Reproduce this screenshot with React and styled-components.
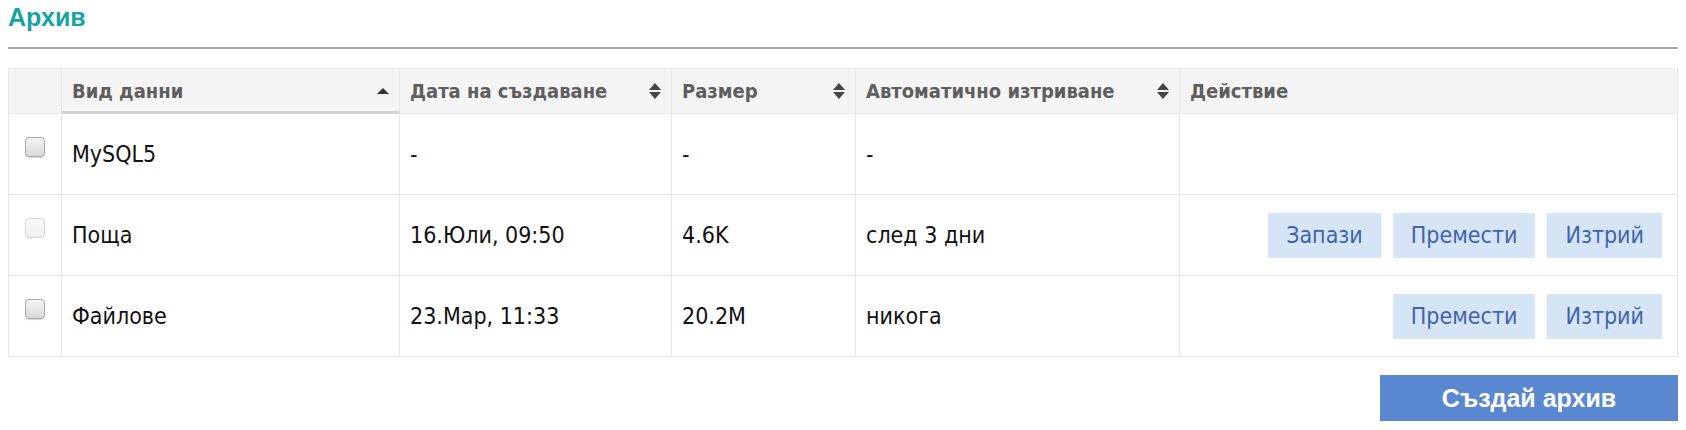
import React from "react"
import styled, { createGlobalStyle, css } from "styled-components"

const GlobalStyle = createGlobalStyle`
  html, body {
    margin: 0;
    padding: 0;
    background: #fff;
  }
  body {
    font-family: "DejaVu Sans Condensed", "DejaVu Sans", Tahoma, sans-serif;
  }
`

const Page = styled.div`
  padding: 3px 8px 0;
  box-sizing: border-box;
  width: 1686px;
`

const Title = styled.h2`
  margin: 0;
  font-family: "Liberation Sans", Arial, sans-serif;
  font-size: 25px;
  line-height: 28px;
  font-weight: bold;
  color: #17a3a6;
`

const Rule = styled.div`
  height: 2px;
  margin-top: 16px;
  background: #aaaaaa;
`

const Table = styled.table`
  width: 100%;
  margin-top: 19px;
  border-collapse: collapse;
  table-layout: fixed;
  border: 1px solid #e6e6e6;
`

const Th = styled.th`
  height: 44px;
  padding: 0 10px;
  background: #f5f5f5;
  border: 1px solid #e6e6e6;
  text-align: left;
  font-size: 20px;
  font-weight: bold;
  color: #5e5e5e;
  white-space: nowrap;

  ${(p) =>
    p.$active &&
    css`
      border-bottom-color: #d4d4d4;
      box-shadow: inset 0 -2px 0 #d4d4d4;
    `}
`

const HeadInner = styled.div`
  display: flex;
  align-items: center;
  justify-content: space-between;
`

const Td = styled.td`
  height: 81px;
  padding: 0 10px;
  box-sizing: border-box;
  border: 1px solid #e6e6e6;
  font-size: 23px;
  color: #111;
  vertical-align: middle;
  white-space: nowrap;
`

const CheckCell = styled(Td)`
  padding: 0;
`

const Check = styled.input.attrs({ type: "checkbox" })`
  appearance: none;
  display: block;
  margin: 0 auto 14px;
  width: 20px;
  height: 20px;
  box-sizing: border-box;
  border-radius: 4px;
  border: 1px solid ${(p) => (p.disabled ? "#d6d6d6" : "#a9a9a9")};
  background: ${(p) =>
    p.disabled
      ? "linear-gradient(#fafafa, #efefef)"
      : "linear-gradient(#f5f5f5, #d9d9d9)"};
  box-shadow: ${(p) => (p.disabled ? "none" : "0 1px 1px rgba(0,0,0,0.15)")};
`

const Actions = styled.div`
  display: flex;
  justify-content: flex-end;
  gap: 12px;
  padding-right: 5px;
`

const ActionButton = styled.button`
  height: 45px;
  padding: 0 18px;
  border: none;
  background: #d6e5f5;
  color: #3e63ad;
  font-family: "DejaVu Sans Condensed", "DejaVu Sans", Tahoma, sans-serif;
  font-size: 23px;
  cursor: pointer;
`

const Footer = styled.div`
  display: flex;
  justify-content: flex-end;
  margin-top: 18px;
`

const CreateButton = styled.button`
  width: 298px;
  height: 46px;
  border: none;
  background: #5a88d0;
  color: #fff;
  font-family: "Liberation Sans", Arial, sans-serif;
  font-size: 25px;
  font-weight: bold;
  cursor: pointer;
`

function SortIcon({ only }) {
  if (only === "up") {
    return (
      <svg width="12" height="6" viewBox="0 0 12 6">
        <path d="M0 6 L6 0 L12 6 Z" fill="#333" />
      </svg>
    )
  }
  return (
    <svg width="12" height="16" viewBox="0 0 12 16">
      <path d="M0 7 L6 0 L12 7 Z" fill="#444" />
      <path d="M0 9 L6 16 L12 9 Z" fill="#444" />
    </svg>
  )
}

const columns = [
  { label: "Вид данни", sort: "up", active: true },
  { label: "Дата на създаване", sort: "both" },
  { label: "Размер", sort: "both" },
  { label: "Автоматично изтриване", sort: "both" },
  { label: "Действие" },
]

const rows = [
  { name: "MySQL5", date: "-", size: "-", auto: "-", actions: [] },
  {
    name: "Поща",
    date: "16.Юли, 09:50",
    size: "4.6K",
    auto: "след 3 дни",
    disabled: true,
    actions: ["Запази", "Премести", "Изтрий"],
  },
  {
    name: "Файлове",
    date: "23.Мар, 11:33",
    size: "20.2M",
    auto: "никога",
    actions: ["Премести", "Изтрий"],
  },
]

export default function App() {
  return (
    <>
      <GlobalStyle />
      <Page>
        <Title>Архив</Title>
        <Rule />
        <Table>
          <colgroup>
            <col style={{ width: 53 }} />
            <col style={{ width: 338 }} />
            <col style={{ width: 272 }} />
            <col style={{ width: 184 }} />
            <col style={{ width: 324 }} />
            <col />
          </colgroup>
          <thead>
            <tr>
              <Th />
              {columns.map((c) => (
                <Th key={c.label} $active={c.active}>
                  <HeadInner>
                    <span>{c.label}</span>
                    {c.sort && <SortIcon only={c.sort} />}
                  </HeadInner>
                </Th>
              ))}
            </tr>
          </thead>
          <tbody>
            {rows.map((r) => (
              <tr key={r.name}>
                <CheckCell>
                  <Check disabled={r.disabled} />
                </CheckCell>
                <Td>{r.name}</Td>
                <Td>{r.date}</Td>
                <Td>{r.size}</Td>
                <Td>{r.auto}</Td>
                <Td>
                  <Actions>
                    {r.actions.map((a) => (
                      <ActionButton key={a}>{a}</ActionButton>
                    ))}
                  </Actions>
                </Td>
              </tr>
            ))}
          </tbody>
        </Table>
        <Footer>
          <CreateButton>Създай архив</CreateButton>
        </Footer>
      </Page>
    </>
  )
}
